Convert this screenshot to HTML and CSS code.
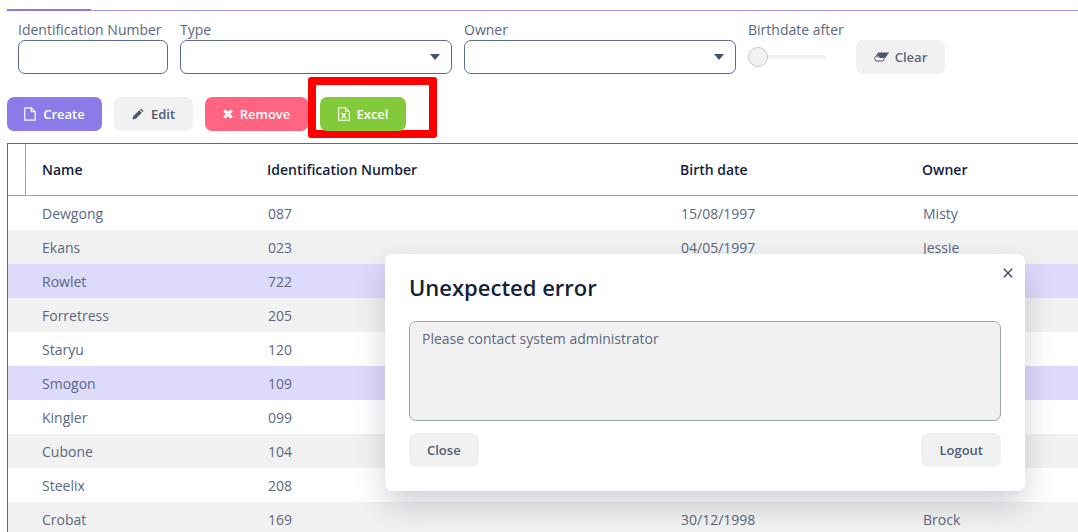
FILE: index.html
```html
<!DOCTYPE html>
<html lang="en">
<head>
<meta charset="utf-8">
<title>Pokemon</title>
<link rel="stylesheet" href="styles.css">
</head>
<body>
<div class="page">
  <div class="tabline"><span class="tab-active"></span></div>
  <div class="filters">
    <label class="field f-id"><span class="lbl">Identification Number</span><input class="inp" type="text"></label>
    <div class="field f-sel"><span class="lbl">Type</span><div class="inp sel"><svg class="caret" width="10" height="6" viewBox="0 0 10 6"><path d="M0 0h10L5 6z"/></svg></div></div>
    <div class="field f-sel"><span class="lbl">Owner</span><div class="inp sel"><svg class="caret" width="10" height="6" viewBox="0 0 10 6"><path d="M0 0h10L5 6z"/></svg></div></div>
    <div class="field f-slider"><span class="lbl">Birthdate after</span><div class="slider"><span class="track"></span><span class="knob"></span></div></div>
    <button class="btn grey clear"><svg width="15" height="10" viewBox="0 0 15 10"><path d="M5 .5H14.500L10 6H4.500L6 4.800H2.500z" fill="#4b5468"/><path d="M4.500 .5L.5 6.300 2 9H8.800L14.500 .5" fill="none" stroke="#4b5468" stroke-width="1"/></svg>Clear</button>
  </div>
  <div class="toolbar">
    <button class="btn purple"><svg width="12" height="14" viewBox="0 0 12 14" fill="none" stroke="#fff" stroke-width="1.200"><path d="M.8.8h6.500l3.900 3.900v8.500H.8z"/><path d="M7.300.8v3.900h3.900"/></svg>Create</button>
    <button class="btn grey"><svg width="12" height="12" viewBox="0 0 12 12"><path d="M0.500 11.500l.7-3.300 6-6 2.600 2.600-6 6zM8 1.400l1-1 2.600 2.600-1 1z" fill="#4b5468"/></svg>Edit</button>
    <button class="btn pink"><svg width="10" height="10" viewBox="0 0 10 10"><path d="M2.400.3L5 2.800 7.600.3l2.100 2.100L7.200 5l2.500 2.600-2.100 2.100L5 7.200 2.400 9.700.3 7.600 2.800 5 .3 2.400z" fill="#fff"/></svg>Remove</button>
    <button class="btn green"><svg width="12" height="14" viewBox="0 0 12 14" fill="none" stroke="#fff" stroke-width="1.100"><path d="M.7.7h6.800l3.800 3.800v8.800H.7z"/><path d="M7.500.7v3.800h3.800"/><path d="M3.700 6l4.300 5.300M8 6l-4.300 5.300" stroke-width="1.300"/></svg>Excel</button>
  </div>
  <div class="table">
    <div class="thead">
      <div class="c0"></div>
      <div class="c1">Name</div><div class="c2">Identification Number</div><div class="c3">Birth date</div><div class="c4">Owner</div>
    </div>
    <div class="row"><div class="c0"></div><div class="c1">Dewgong</div><div class="c2">087</div><div class="c3">15/08/1997</div><div class="c4">Misty</div></div>
    <div class="row alt"><div class="c0"></div><div class="c1">Ekans</div><div class="c2">023</div><div class="c3">04/05/1997</div><div class="c4">Jessie</div></div>
    <div class="row sel-row"><div class="c0"></div><div class="c1">Rowlet</div><div class="c2">722</div><div class="c3"></div><div class="c4"></div></div>
    <div class="row alt"><div class="c0"></div><div class="c1">Forretress</div><div class="c2">205</div><div class="c3"></div><div class="c4"></div></div>
    <div class="row"><div class="c0"></div><div class="c1">Staryu</div><div class="c2">120</div><div class="c3"></div><div class="c4"></div></div>
    <div class="row sel-row"><div class="c0"></div><div class="c1">Smogon</div><div class="c2">109</div><div class="c3"></div><div class="c4"></div></div>
    <div class="row"><div class="c0"></div><div class="c1">Kingler</div><div class="c2">099</div><div class="c3"></div><div class="c4"></div></div>
    <div class="row alt"><div class="c0"></div><div class="c1">Cubone</div><div class="c2">104</div><div class="c3"></div><div class="c4"></div></div>
    <div class="row"><div class="c0"></div><div class="c1">Steelix</div><div class="c2">208</div><div class="c3"></div><div class="c4"></div></div>
    <div class="row alt"><div class="c0"></div><div class="c1">Crobat</div><div class="c2">169</div><div class="c3">30/12/1998</div><div class="c4">Brock</div></div>
  </div>
</div>
<div class="highlight"></div>
<div class="modal">
  <svg class="x" width="10" height="10" viewBox="0 0 10 10" fill="none" stroke="#33405a" stroke-width="1.300"><path d="M.8.8l8.400 8.400M9.200.8L.8 9.200"/></svg>
  <h2 class="title">Unexpected error</h2>
  <div class="msg">Please contact system administrator</div>
  <div class="actions">
    <button class="btn grey plain">Close</button>
    <button class="btn grey plain">Logout</button>
  </div>
</div>
</body>
</html>
```
FILE: styles.css
```css
* { box-sizing: border-box; }
html, body { margin: 0; padding: 0; }
body {
  width: 1078px; height: 532px; overflow: hidden; position: relative;
  background: #fff; font-family: "Open Sans", sans-serif; font-size: 14px; color: #5b6780;
}
.page { padding: 10px 0 0 7px; }
.tabline { height: 1px; background: #a797f0; position: relative; }
.tab-active { display: block; width: 84px; height: 2px; background: #8a7be8; position: absolute; left: 0; top: -1px; }
.filters { display: flex; align-items: flex-end; padding: 12px 0 0 11px; height: 63px; }
.field { display: flex; flex-direction: column; }
.lbl { font-size: 14px; line-height: 18px; white-space: nowrap; position: relative; top: -1px; }
.inp { height: 34px; border: 1px solid #5b6b8c; border-radius: 7px; background: #fff; display: block; padding: 0; }
.f-id { width: 150px; margin-right: 12px; }
.f-id .inp { width: 150px; }
.f-sel { width: 272px; margin-right: 12px; }
.sel { position: relative; }
.caret { position: absolute; right: 11px; top: 13px; fill: #46536f; }
.f-slider { width: 108px; }
.slider { height: 34px; display: flex; align-items: center; position: relative; }
.track { width: 78px; height: 4px; background: #f1f1f1; border-radius: 2px; }
.knob { position: absolute; left: 0; top: 7px; width: 20px; height: 20px; border-radius: 50%; background: #f1f1f1; border: 1px solid #c8c8c8; }
.btn {
  display: inline-flex; align-items: center; justify-content: center; gap: 7px;
  height: 34px; border: 0; border-radius: 7px; font-family: inherit; font-size: 13px; font-weight: 600;
  padding: 0; white-space: nowrap;
}
.grey { background: #f1f1f1; color: #4f5b73; }
.clear { width: 89px; color: #5b6780; gap: 6px; }
.purple { background: #8a7be8; color: #fff; width: 95px; margin-right: 12px; }
.toolbar { display: flex; padding-top: 23px; }
.toolbar .grey { width: 79px; margin-right: 12px; }
.pink { background: #ff6480; color: #fff; width: 103px; margin-right: 12px; }
.green { background: #83ca3b; color: #fff; width: 86px; position: relative; z-index: 2; }
.table { margin-top: 12px; border-left: 1px solid #5b6b8c; border-top: 1px solid #5b6b8c; }
.thead, .row { display: flex; }
.thead { height: 52px; border-bottom: 1px solid #9aa3b5; color: #14213d; font-weight: 600; align-items: center; }
.row { height: 34px; align-items: center; }
.alt { background: #f1f1f1; }
.sel-row { background: #dedafb; }
.thead .c0 { height: 51px; border-right: 1px solid #9aa3b5; }
.c0 { width: 18px; flex: none; }
.c1 { width: 241px; padding-left: 16px; flex: none; }
.c2 { width: 413px; flex: none; }
.c3 { width: 242px; flex: none; }
.c4 { flex: 1; }
.row .c2, .row .c3, .row .c4 { padding-left: 1px; }
.highlight {
  position: absolute; left: 308px; top: 77px; width: 129px; height: 61px;
  border: 8px solid #ff0000; border-radius: 3px; z-index: 1;
}
.modal {
  position: absolute; left: 385px; top: 254px; width: 640px; height: 237px; z-index: 3;
  background: #fff; border-radius: 7px; box-shadow: 0 14px 30px rgba(40, 50, 80, .22);
  padding: 18px 24px 0 24px;
}
.x { position: absolute; right: 12px; top: 14px; }
.title { margin: 0; font-size: 22px; font-weight: 600; line-height: 30px; color: #14213d; }
.msg {
  margin-top: 19px; height: 100px; background: #f1f1f1; border: 1px solid #9aa3b5; border-radius: 7px;
  padding: 8px 12px; line-height: 18px;
}
.actions { display: flex; justify-content: space-between; margin-top: 12px; }
.plain { padding: 0 18px; }
```
